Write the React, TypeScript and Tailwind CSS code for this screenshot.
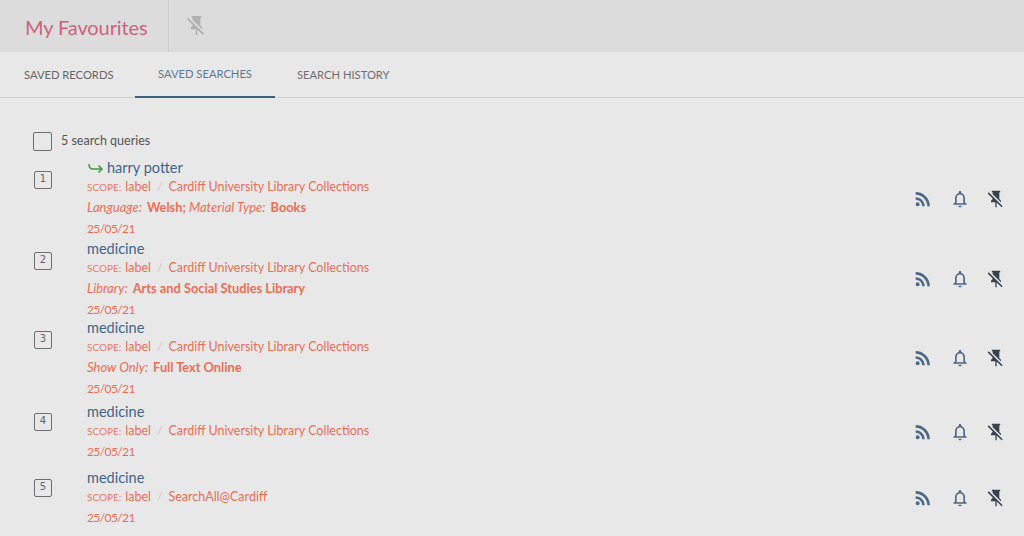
const RSS_PATHS = [
  "M4 4.44v2.83c7.03 0 12.73 5.7 12.73 12.73h2.83c0-8.59-6.97-15.56-15.56-15.56z",
  "M4 10.1v2.83c3.9 0 7.07 3.17 7.07 7.07h2.83c0-5.47-4.43-9.9-9.9-9.9z",
  "M6.18 15.64a2.18 2.18 0 1 0 0 4.36 2.18 2.18 0 0 0 0-4.36z",
];
const BELL_PATH =
  "M12 22c1.1 0 2-.9 2-2h-4c0 1.1.9 2 2 2zm6-6v-5c0-3.07-1.63-5.64-4.5-6.32V4c0-.83-.67-1.5-1.5-1.5s-1.5.67-1.5 1.5v.68C7.64 5.36 6 7.92 6 11v5l-2 2v1h16v-1l-2-2zm-2 1H8v-6c0-2.48 1.51-4.5 4-4.5s4 2.02 4 4.5v6z";
const PIN_OFF_PATH =
  "M2 5.27 3.28 4 20 20.72 18.73 22l-5.93-5.93V22h-1.6v-6H6v-2l2-2v-.73l-6-6M16 12l2 2v2h-.18L8 6.18V4H7V2h10v2h-1v8z";

interface Query {
  title: string;
  arrow?: boolean;
  source: string;
  facets?: { label: string; value: string }[];
  rowClass: string;
  boxClass: string;
}

const queries: Query[] = [
  {
    title: "harry potter",
    arrow: true,
    source: "Cardiff University Library Collections",
    facets: [
      { label: "Language:", value: "Welsh;" },
      { label: "Material Type:", value: "Books" },
    ],
    rowClass: "h-[81px]",
    boxClass: "pt-[13px]",
  },
  {
    title: "medicine",
    source: "Cardiff University Library Collections",
    facets: [{ label: "Library:", value: "Arts and Social Studies Library" }],
    rowClass: "h-[79px]",
    boxClass: "pt-[13px]",
  },
  {
    title: "medicine",
    source: "Cardiff University Library Collections",
    facets: [{ label: "Show Only:", value: "Full Text Online" }],
    rowClass: "h-[80px] mb-[4px]",
    boxClass: "pt-[13px]",
  },
  {
    title: "medicine",
    source: "Cardiff University Library Collections",
    rowClass: "h-[60px] mb-[6px]",
    boxClass: "pt-[11px]",
  },
  {
    title: "medicine",
    source: "SearchAll@Cardiff",
    rowClass: "h-[60px]",
    boxClass: "pt-[11px]",
  },
];

function Icon({ children, className }: { children: React.ReactNode; className: string }) {
  return (
    <svg viewBox="0 0 24 24" className={className} fill="currentColor">
      {children}
    </svg>
  );
}

function QueryRow({ query, index }: { query: Query; index: number }) {
  return (
    <div className={`flex shrink-0 ${query.rowClass}`}>
      <div className={`w-[34px] shrink-0 pl-px ${query.boxClass}`}>
        <div className="flex h-[18px] w-[18px] items-start justify-center rounded-[2px] border border-[#6e6e6e] font-['DejaVu_Sans',sans-serif] text-[10px] leading-[14px] text-[#666]">
          {index + 1}
        </div>
      </div>
      <div className="ml-[20px] min-w-0 flex-1">
        <div className="flex h-[19px] items-center text-[14.5px] leading-[19px] text-[#41658a]">
          {query.arrow && (
            <svg viewBox="0 0 15 10" className="mr-[4px] ml-px h-[10px] w-[15px] text-[#3e9b3e]" fill="none" stroke="currentColor" strokeWidth="1.5">
              <path d="M1 1c0 3 1.2 5 4 5h9" />
              <path d="M10.5 2.5 14 6l-3.5 3.5" />
            </svg>
          )}
          {query.title}
        </div>
        <div className="mt-px flex h-[18px] items-center text-[12.5px] leading-[18px] text-[#ee6e55]">
          <span className="text-[10px] text-[#ee7a62]">SCOPE:</span>
          <span className="ml-[4px]">label</span>
          <span className="mx-[6px] font-light text-[#c9a9a2]">/</span>
          <span>{query.source}</span>
        </div>
        {query.facets && (
          <div className="mt-px flex h-[18px] items-center leading-[18px] text-[#ee6e55]">
            {query.facets.map((f) => (
              <span key={f.label} className="mr-[3px]">
                <span className="mr-[5px] text-[13px] italic">{f.label}</span>
                <span className="text-[12.8px] font-bold">{f.value}</span>
              </span>
            ))}
          </div>
        )}
        <div className={`h-[18px] text-[12px] leading-[18px] tracking-[-0.6px] text-[#ee6e55] ${query.facets ? "mt-[5px]" : "mt-[3px]"}`}>
          25/05/21
        </div>
      </div>
      <div className="flex items-center gap-[16px] self-center text-[#4c6a88]">
        <Icon className="h-[22px] w-[22px]">
          {RSS_PATHS.map((d) => (
            <path key={d} d={d} />
          ))}
        </Icon>
        <Icon className="h-[20px] w-[20px]">
          <path d={BELL_PATH} />
        </Icon>
        <Icon className="h-[20px] w-[20px] text-[#37424f]">
          <path d={PIN_OFF_PATH} />
        </Icon>
      </div>
    </div>
  );
}

export default function App() {
  return (
    <div className="flex h-[536px] w-[1024px] flex-col overflow-hidden bg-[#e8e8e8] font-['Lato','Noto_Sans',sans-serif]">
      <header className="flex h-[52px] shrink-0 items-stretch bg-[#dcdcdc]">
        <h1 className="flex w-[169px] items-center border-r border-[#cfcfcf] pt-[2px] pl-[25px] text-[20px] font-normal tracking-[-0.1px] text-[#cf6279]">
          My Favourites
        </h1>
        <div className="flex items-center pb-[2px] pl-[16px] text-[#b0b0b0]">
          <Icon className="h-[23px] w-[23px]">
            <path d={PIN_OFF_PATH} />
          </Icon>
        </div>
      </header>
      <nav className="flex h-[46px] shrink-0 border-b border-[#d4d4d4] pt-px text-[11.2px] font-normal">
        <div className="flex w-[135px] items-center pl-[24px] text-[#666]">SAVED RECORDS</div>
        <div className="-mb-px flex w-[140px] items-center justify-center border-b-2 border-[#3f5f7f] text-[#5f7a94]">
          SAVED SEARCHES
        </div>
        <div className="flex items-center pl-[22px] text-[#6f6f6f]">SEARCH HISTORY</div>
      </nav>
      <main className="flex flex-1 flex-col pr-[18px] pl-[33px]">
        <div className="flex h-[60px] shrink-0 items-center pt-[27px]">
          <div className="h-[19px] w-[19px] rounded-[2px] border border-[#6e6e6e]" />
          <span className="ml-[9px] text-[12.5px] text-[#555]">5 search queries</span>
        </div>
        {queries.map((q, i) => (
          <QueryRow key={i} query={q} index={i} />
        ))}
      </main>
    </div>
  );
}
